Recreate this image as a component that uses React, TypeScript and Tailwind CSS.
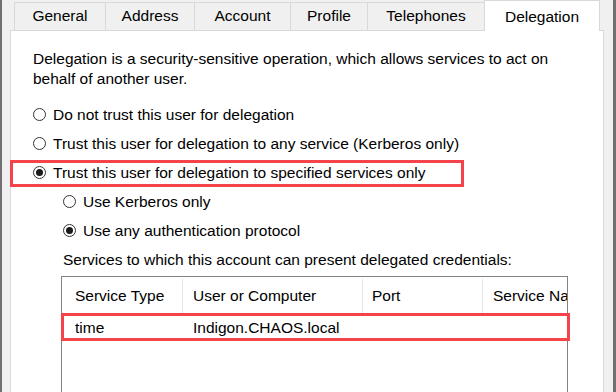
import React from "react";

const tabs = [
  { label: "General", w: "w-[92px]" },
  { label: "Address", w: "w-[90px]" },
  { label: "Account", w: "w-[97px]" },
  { label: "Profile", w: "w-[78px]" },
  { label: "Telephones", w: "w-[118px]" },
];

function Radio({ checked }: { checked?: boolean }) {
  return (
    <span className="flex h-[13px] w-[13px] shrink-0 items-center justify-center rounded-full border border-[#333333] bg-white">
      {checked && <span className="h-[7px] w-[7px] rounded-full bg-[#1a1a1a]" />}
    </span>
  );
}

function Option({ label, checked }: { label: string; checked?: boolean }) {
  return (
    <div className="flex h-[29px] items-center gap-[7px]">
      <Radio checked={checked} />
      <span>{label}</span>
    </div>
  );
}

export default function App() {
  return (
    <div
      className="relative flex h-[392px] w-[616px] overflow-hidden bg-[#f0f0f0] text-[15.5px] text-black"
      style={{ fontFamily: '"Liberation Sans", Arial, sans-serif' }}
    >
      {/* window edge */}
      <div className="w-[2px] bg-[#707070]" />

      <div className="flex w-[602px] flex-col pl-[8px]">
        {/* Tabs */}
        <div className="flex h-[30px] items-end pl-[4px]">
          {tabs.map((t) => (
            <div
              key={t.label}
              className={`${t.w} flex h-[28px] items-center justify-center border border-b-0 border-[#d9d9d9] bg-[#f0f0f0] pb-[1px] -ml-px first:ml-0`}
            >
              {t.label}
            </div>
          ))}
          <div className="relative z-10 -mb-px flex h-[31px] w-[116px] -ml-px items-start justify-center border border-b-0 border-[#d9d9d9] bg-white pt-[4px]">
            Delegation
          </div>
        </div>

        {/* Panel */}
        <div className="flex-1 border border-[#d9d9d9] bg-white pl-[22px] pt-[18px]">
          <p className="w-[530px] leading-[20px]">
            Delegation is a security-sensitive operation, which allows services to act on behalf of another user.
          </p>

          <div className="mt-[11px]">
            <Option label="Do not trust this user for delegation" />
            <Option label="Trust this user for delegation to any service (Kerberos only)" />
            <Option label="Trust this user for delegation to specified services only" checked />
            <div className="pl-[30px]">
              <Option label="Use Kerberos only" />
              <Option label="Use any authentication protocol" checked />
              <div className="flex h-[29px] items-center">
                Services to which this account can present delegated credentials:
              </div>

              {/* Services list */}
              <div className="-ml-[2px] mt-[2px] h-[140px] w-[507px] overflow-hidden border border-[#828282] bg-white">
                <div className="flex h-[38px] items-center">
                  <div className="flex h-[34px] w-[121px] items-center border-r border-[#e5e5e5] pl-[13px]">
                    Service Type
                  </div>
                  <div className="flex h-[34px] w-[180px] items-center border-r border-[#e5e5e5] pl-[10px]">
                    User or Computer
                  </div>
                  <div className="flex h-[34px] w-[120px] items-center border-r border-[#e5e5e5] pl-[9px]">
                    Port
                  </div>
                  <div className="flex h-[34px] flex-1 items-center overflow-hidden whitespace-nowrap pl-[10px]">
                    Service Name
                  </div>
                </div>
                <div className="flex h-[26px] items-center">
                  <div className="w-[121px] pl-[13px]">time</div>
                  <div className="w-[180px] pl-[10px]">Indigon.CHAOS.local</div>
                </div>
              </div>
            </div>
          </div>
        </div>
      </div>

      {/* right side */}
      <div className="w-[9px] bg-[#f0f0f0]" />
      <div className="w-[3px] bg-[#707070]" />

      {/* annotation boxes */}
      <div className="absolute left-[10px] top-[160px] h-[27px] w-[454px] border-[3px] border-[#f4434a]" />
      <div className="absolute left-[61px] top-[313px] h-[28px] w-[509px] border-[3px] border-[#f4434a]" />
    </div>
  );
}
